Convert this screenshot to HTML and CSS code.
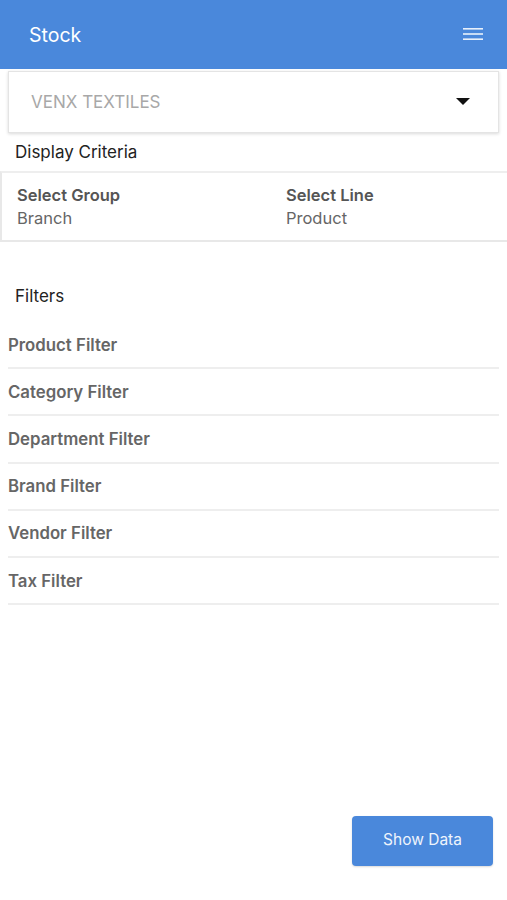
FILE: index.html
```html
<!DOCTYPE html>
<html>
<head>
<meta charset="utf-8">
<link rel="stylesheet" href="styles.css">
</head>
<body>
<header class="appbar">
  <span class="title">Stock</span>
  <svg class="menu" width="20" height="14" viewBox="0 0 20 14"><rect x="0" y="1" width="20" height="1.6" fill="#e8f0fb"/><rect x="0" y="6.2" width="20" height="1.6" fill="#e8f0fb"/><rect x="0" y="11.4" width="20" height="1.6" fill="#e8f0fb"/></svg>
</header>
<main class="content">
  <div class="select-card">
    <span class="select-text">VENX TEXTILES</span>
    <svg class="caret" width="14" height="8" viewBox="0 0 14 8"><path d="M0 0 L14 0 L7 7 Z" fill="#111"/></svg>
  </div>
  <div class="section-title criteria-title">Display Criteria</div>
  <div class="criteria">
    <div class="crit-col">
      <div class="crit-label">Select Group</div>
      <div class="crit-value">Branch</div>
    </div>
    <div class="crit-col">
      <div class="crit-label">Select Line</div>
      <div class="crit-value">Product</div>
    </div>
  </div>
  <div class="section-title filters-title">Filters</div>
  <ul class="filters">
    <li>Product Filter</li>
    <li>Category Filter</li>
    <li>Department Filter</li>
    <li>Brand Filter</li>
    <li>Vendor Filter</li>
    <li>Tax Filter</li>
  </ul>
  <div class="actions">
    <button class="show-btn">Show Data</button>
  </div>
</main>
</body>
</html>
```
FILE: styles.css
```css
* { box-sizing: border-box; }
html, body { margin: 0; padding: 0; }
body {
  font-family: Inter, Roboto, sans-serif;
  background: #fff;
  width: 507px;
  height: 900px;
  overflow: hidden;
}
.appbar {
  height: 69px;
  background: #4a88db;
  display: flex;
  align-items: center;
  justify-content: space-between;
  padding: 0 24px 0 29px;
}
.title {
  color: #fff;
  font-size: 19.5px;
  font-weight: 400;
}
.menu { display: block; margin-top: -2px; }
.content {
  display: flex;
  flex-direction: column;
}
.select-card {
  margin: 2px 8px 0 8px;
  height: 62px;
  border: 1px solid #e4e4e4;
  box-shadow: 0 1px 3px rgba(0,0,0,0.15);
  display: flex;
  align-items: center;
  justify-content: space-between;
  padding: 0 28px 0 22px;
}
.select-text {
  color: #a8a8a8;
  font-size: 17px;
}
.caret { display: block; }
.section-title {
  color: #222;
  font-size: 17px;
  padding-left: 15px;
}
.criteria-title {
  height: 38px;
  display: flex;
  align-items: center;
}
.criteria {
  height: 71px;
  border-top: 2px solid #eeeeee;
  border-bottom: 2px solid #e8e8e8;
  border-left: 2px solid #e8e8e8;
  display: grid;
  grid-template-columns: 269px 1fr;
  padding: 11px 0 0 15px;
}
.crit-label {
  color: #555;
  font-size: 16.5px;
  font-weight: 600;
  line-height: 23px;
}
.crit-value {
  color: #666;
  font-size: 16.5px;
  line-height: 23px;
}
.filters-title {
  margin-top: 42px;
  height: 24px;
  display: flex;
  align-items: center;
}
.filters {
  list-style: none;
  margin: 14px 8px 0 8px;
  padding: 0;
}
.filters li {
  height: 47.2px;
  border-bottom: 2px solid #eeeeee;
  color: #666;
  font-size: 16.8px;
  font-weight: 600;
  display: flex;
  align-items: center;
}
.actions {
  display: flex;
  justify-content: flex-end;
  padding-right: 14px;
  margin-top: 211px;
}
.show-btn {
  width: 141px;
  height: 50px;
  background: #4a88db;
  border: none;
  border-radius: 4px;
  color: #eef4fc;
  font-family: Inter, Roboto, sans-serif;
  font-size: 15.5px;
  box-shadow: 0 1px 2px rgba(0,0,0,0.15);
  padding-bottom: 4px;
}
```
